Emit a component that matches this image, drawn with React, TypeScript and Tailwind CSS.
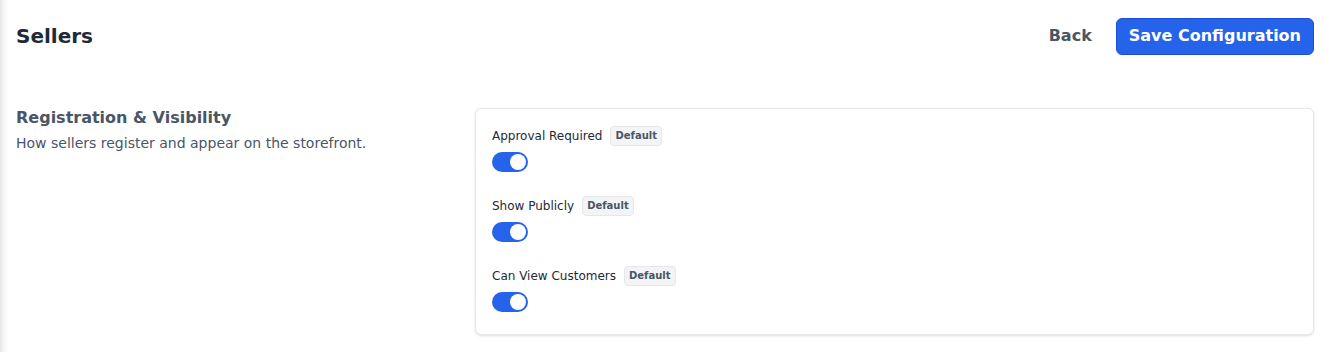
const settings = [
  { label: "Approval Required", on: true },
  { label: "Show Publicly", on: true },
  { label: "Can View Customers", on: true },
];

function Toggle({ on }: { on: boolean }) {
  return (
    <button
      type="button"
      className={`flex h-5 w-9 items-center rounded-full px-0.5 ${
        on ? "justify-end bg-[#2563eb]" : "justify-start bg-gray-300"
      }`}
    >
      <span className="h-4 w-4 rounded-full bg-white" />
    </button>
  );
}

export default function App() {
  return (
    <div className="min-h-[352px] bg-[linear-gradient(to_right,#e6e6e6,#f6f6f6_4px,#ffffff_9px)] font-['DejaVu_Sans',sans-serif] text-gray-800">
      <header className="flex h-[72px] items-center justify-between px-4">
        <h1 className="text-xl font-bold text-[#1f2937]">Sellers</h1>
        <div className="flex items-center gap-3">
          <button className="px-3 text-base font-bold text-gray-600">Back</button>
          <button className="h-[37px] rounded-md border border-[#1d4ed8] bg-[#2563eb] px-3 text-base font-bold text-white">
            Save Configuration
          </button>
        </div>
      </header>

      <section className="mt-9 grid grid-cols-[459px_1fr] px-4">
        <div>
          <h2 className="text-base font-semibold leading-5 text-gray-600">
            Registration &amp; Visibility
          </h2>
          <p className="mt-[5px] text-sm text-gray-600">
            How sellers register and appear on the storefront.
          </p>
        </div>

        <div className="flex flex-col gap-6 rounded-md border border-gray-200 bg-white px-4 pb-[22px] pt-[17px] shadow-sm">
          {settings.map((s) => (
            <div key={s.label}>
              <div className="flex h-5 items-center gap-2">
                <span className="text-xs text-gray-800">{s.label}</span>
                <span className="rounded border border-gray-200 bg-gray-100 px-1 py-0.5 text-[10px] font-bold leading-[14px] text-gray-600">
                  Default
                </span>
              </div>
              <div className="mt-1.5 flex">
                <Toggle on={s.on} />
              </div>
            </div>
          ))}
        </div>
      </section>
    </div>
  );
}
